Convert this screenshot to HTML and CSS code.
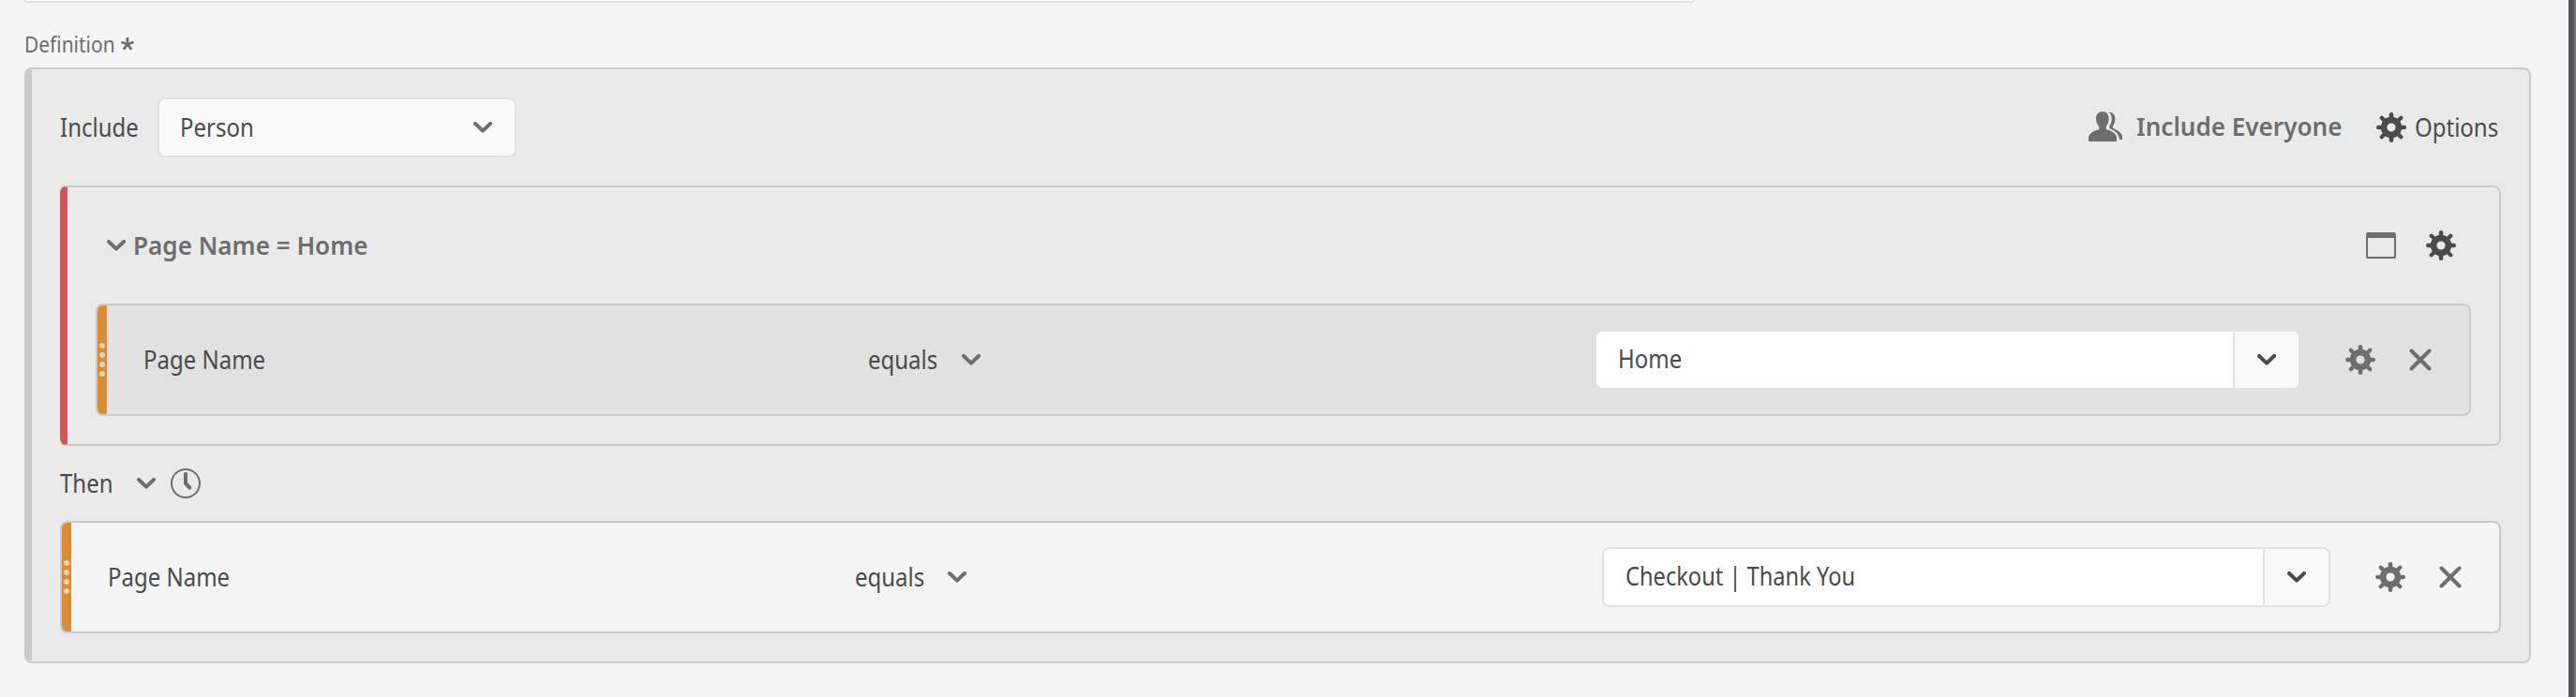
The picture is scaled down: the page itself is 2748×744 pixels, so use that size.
FILE: index.html
```html
<!DOCTYPE html>
<html lang="en">
<head>
<meta charset="utf-8">
<title>Segment definition</title>
<link rel="stylesheet" href="styles.css">
</head>
<body>
<svg class="defs" width="0" height="0">
  <symbol id="gear" viewBox="-16 -16 32 32">
    <g stroke="currentColor" stroke-width="4.6" stroke-linecap="round">
      <path d="M0 -13.7V-9M0 13.7V9M-13.7 0H-9M13.7 0H9"/>
      <path stroke-width="4.2" d="M-10.3 -10.3L-7 -7M10.3 -10.3L7 -7M-10.3 10.3L-7 7M10.3 10.3L7 7"/>
    </g>
    <circle r="7.9" fill="none" stroke="currentColor" stroke-width="6.6"/>
  </symbol>
  <symbol id="chevron" viewBox="0 0 20 12">
    <path d="M2 2L10 9.6L18 2" fill="none" stroke="currentColor" stroke-width="4" stroke-linecap="round" stroke-linejoin="round"/>
  </symbol>
  <symbol id="cross" viewBox="0 0 24 24">
    <path d="M2.5 2.5L21.5 21.5M21.5 2.5L2.5 21.5" fill="none" stroke="currentColor" stroke-width="4" stroke-linecap="round"/>
  </symbol>
</svg>
<div class="page">
  <main class="content">
    <div class="prev-input"></div>
    <div class="label-row">
      <span class="label-box"><span class="txt small">Definition</span></span>
      <svg class="asterisk" width="14" height="14" viewBox="-7 -7 14 14"><path d="M0 0V-7M0 0L6.6 -2M0 0L4.1 5.8M0 0L-4.1 5.8M0 0L-6.6 -2" fill="none" stroke="currentColor" stroke-width="2.8"/></svg>
    </div>
    <section class="panel">
      <header class="panel-head">
        <span class="include"><span class="txt">Include</span></span>
        <div class="select"><span class="txt">Person</span><svg class="chev"><use href="#chevron"/></svg></div>
        <span class="spacer"></span>
        <svg class="people" width="36" height="32" viewBox="0 0 36 32">
          <path fill="currentColor" d="M14.8 0C18.8 0 21.6 3 21.6 7.8C21.6 11.8 20 14.2 18.8 16V19.2C25 20.6 30 23.6 30 28V32H0V28C0 23.6 5 20.6 11.2 19.2V16C9.6 14.2 8 11.8 8 7.8C8 3 10.8 0 14.8 0Z"/>
          <path fill="currentColor" d="M21.5 .8C25.8 .6 28.4 3.5 28.4 8.2C28.4 12 27 14 26 15.6V18C32 20 36 23.4 36 27.6V30H33C32.6 23.6 28 20.2 22.4 18.2V15.2C23.6 13.4 24.7 11.4 24.7 8C24.7 4.6 23.4 2.2 21.5 .8Z"/>
        </svg>
        <span class="everyone"><span class="txt bold">Include Everyone</span></span>
        <svg class="gear dark"><use href="#gear"/></svg>
        <span class="options"><span class="txt">Options</span></span>
      </header>
      <section class="container">
        <div class="container-head">
          <svg class="chev"><use href="#chevron"/></svg>
          <span class="title"><span class="txt bold">Page Name = Home</span></span>
          <span class="spacer"></span>
          <svg class="window" width="32" height="28" viewBox="0 0 32 28"><rect x="1" y="1" width="30" height="26" rx="1" fill="none" stroke="currentColor" stroke-width="2"/><path fill="currentColor" d="M1 1H31V6H1Z"/></svg>
          <svg class="gear dark"><use href="#gear"/></svg>
        </div>
        <div class="rule nested">
          <div class="handle"><i></i><i></i><i></i><i></i></div>
          <span class="dimension"><span class="txt">Page Name</span></span>
          <span class="operator"><span class="txt">equals</span></span>
          <svg class="chev"><use href="#chevron"/></svg>
          <span class="spacer"></span>
          <div class="combo"><span class="value"><span class="txt">Home</span></span><span class="toggle"><svg class="chev"><use href="#chevron"/></svg></span></div>
          <svg class="gear"><use href="#gear"/></svg>
          <svg class="cross"><use href="#cross"/></svg>
        </div>
      </section>
      <div class="then">
        <span class="then-label"><span class="txt">Then</span></span>
        <svg class="chev"><use href="#chevron"/></svg>
        <svg class="clock" width="32" height="32" viewBox="0 0 32 32"><circle cx="16" cy="16" r="15" fill="none" stroke="currentColor" stroke-width="2"/><path d="M16 6V16L20.4 20.6" fill="none" stroke="currentColor" stroke-width="4" stroke-linecap="round" stroke-linejoin="round"/></svg>
      </div>
      <div class="rule wide">
        <div class="handle"><i></i><i></i><i></i><i></i></div>
        <span class="dimension"><span class="txt">Page Name</span></span>
        <span class="operator"><span class="txt">equals</span></span>
        <svg class="chev"><use href="#chevron"/></svg>
        <span class="spacer"></span>
        <div class="combo"><span class="value"><span class="txt long">Checkout | Thank You</span></span><span class="toggle"><svg class="chev"><use href="#chevron"/></svg></span></div>
        <svg class="gear"><use href="#gear"/></svg>
        <svg class="cross"><use href="#cross"/></svg>
      </div>
    </section>
  </main>
  <div class="edge"></div>
</div>
</body>
</html>
```
FILE: styles.css
```css
* { box-sizing: border-box; }
body { margin: 0; background: #f5f5f5; color: #4b4b4b; font-family: "Noto Sans", "Open Sans", sans-serif; }
svg { display: block; flex: none; }
.defs { position: absolute; }
.page { display: flex; height: 744px; overflow: hidden; }
.content { flex: 1; padding: 0 40px 0 26px; }
.edge { width: 8px; background: #54555b; border-right: 2px solid #77787c; }
.spacer { flex: 1; }

.txt { display: inline-block; font-size: 26.5px; line-height: 36px; white-space: nowrap; transform: scaleX(.905); transform-origin: 0 50%; }
.txt.long { transform: scaleX(.892); }
.txt.bold { font-size: 27px; font-weight: 600; color: #6e6e6e; transform: scaleX(.966); }
.txt.small { font-size: 23px; color: #6e6e6e; transform: scaleX(.91); }

.chev { width: 20px; height: 12px; color: #6e6e6e; }
.gear { width: 32px; height: 32px; color: #6e6e6e; }
.gear.dark { color: #4b4b4b; }
.cross { width: 24px; height: 24px; color: #6e6e6e; }

.prev-input { width: 1782px; height: 3px; background: #fff; border: 2px solid #e1e1e1; border-top: 0; border-radius: 0 0 8px 8px; }
.label-row { display: flex; align-items: center; height: 69px; padding-top: 18px; color: #6e6e6e; }
.label-box { width: 103px; height: 36px; }

.panel { height: 636px; border: 2px solid #cacaca; border-left-width: 8px; border-radius: 8px; background: #eaeaea; padding: 30px; }
.panel-head { display: flex; align-items: center; height: 64px; }
.include { width: 104px; height: 36px; }
.select { display: flex; align-items: center; justify-content: space-between; width: 383px; height: 64px; padding: 0 24px 0 22px; background: #fafafa; border: 2px solid #e1e1e1; border-radius: 8px; }
.people { color: #6e6e6e; margin-bottom: 2px; }
.everyone { width: 271px; height: 36px; padding-left: 15px; margin-top: -3px; }
.options { width: 101px; height: 36px; padding-left: 9px; }

.container { height: 278px; margin-top: 30px; border: 2px solid #cacaca; border-left: 8px solid #d15658; border-radius: 8px; padding: 30px; }
.container-head { display: flex; align-items: center; height: 64px; margin-bottom: 30px; padding: 0 16px 0 12px; }
.title { height: 36px; padding-left: 8px; }
.window { color: #6e6e6e; margin-right: 32px; }

.rule { display: flex; align-items: center; height: 120px; border: 2px solid #cacaca; border-radius: 8px; overflow: hidden; background: #f5f5f5; padding-right: 40px; }
.rule.nested { background: #e1e1e1; }
.handle { display: flex; flex-direction: column; align-items: center; justify-content: center; gap: 4px; width: 10px; height: 116px; background: #da8b36; }
.handle i { width: 6px; height: 6px; border-radius: 50%; background: #f0d0af; }
.dimension { height: 36px; padding-left: 39px; }
.wide .dimension { width: 836px; }
.nested .dimension { width: 812px; }
.operator { width: 100px; height: 36px; }
.wide .operator { width: 99px; }
.combo { display: flex; height: 64px; width: 753px; background: #fff; border: 2px solid #e1e1e1; border-radius: 8px; overflow: hidden; margin-right: 48px; }
.wide .combo { width: 777px; }
.value { flex: 1; padding: 11px 0 0 23px; }
.toggle { width: 70px; padding: 24px 0 0 24px; background: #fafafa; border-left: 2px solid #e1e1e1; }
.toggle .chev { color: #4b4b4b; }
.rule .cross { margin-left: 36px; }

.then { display: flex; align-items: center; height: 80px; }
.then-label { width: 82px; height: 36px; }
.clock { margin-left: 16px; color: #6e6e6e; }
```
